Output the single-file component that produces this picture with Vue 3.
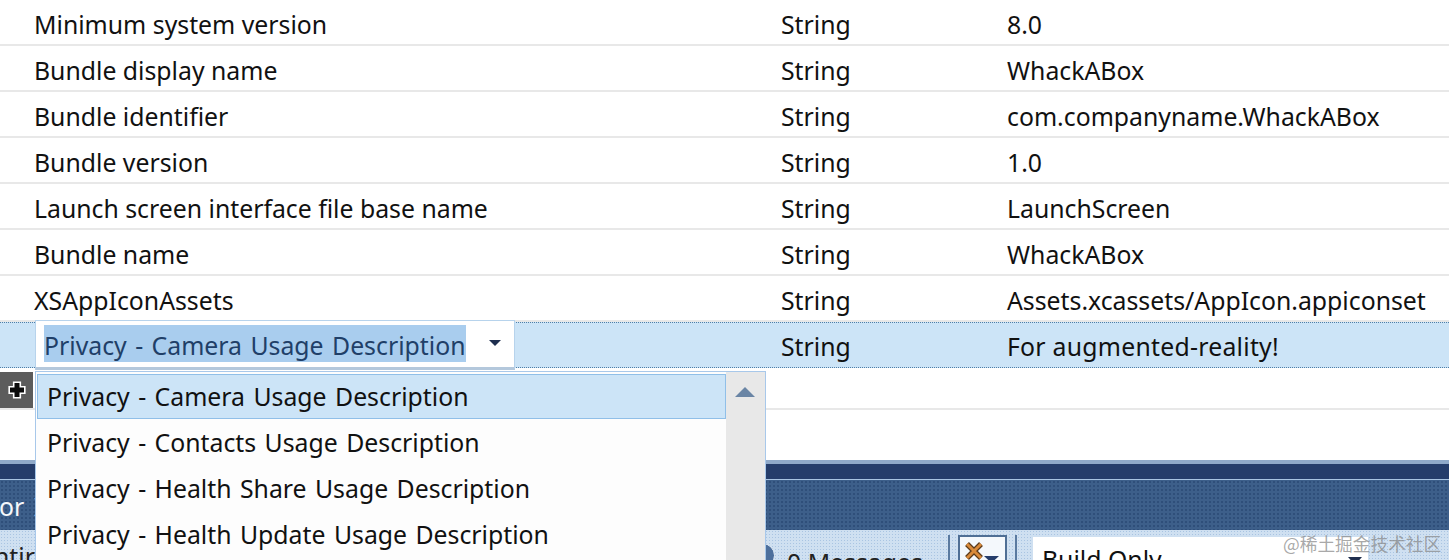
<script setup>
const rows = [
  ['Minimum system version', 'String', '8.0'],
  ['Bundle display name', 'String', 'WhackABox'],
  ['Bundle identifier', 'String', 'com.companyname.WhackABox'],
  ['Bundle version', 'String', '1.0'],
  ['Launch screen interface file base name', 'String', 'LaunchScreen'],
  ['Bundle name', 'String', 'WhackABox'],
  ['XSAppIconAssets', 'String', 'Assets.xcassets/AppIcon.appiconset'],
]
const options = [
  'Privacy - Camera Usage Description',
  'Privacy - Contacts Usage Description',
  'Privacy - Health Share Usage Description',
  'Privacy - Health Update Usage Description',
]
</script>

<template>
  <div class="page">
    <div class="row" v-for="r in rows" :key="r[0]">
      <span class="c1">{{ r[0] }}</span>
      <span class="c2">{{ r[1] }}</span>
      <span class="c3">{{ r[2] }}</span>
    </div>
    <div class="row selected">
      <span class="c1"></span>
      <span class="c2">String</span>
      <span class="c3 wide">For augmented-reality!</span>
    </div>
    <div class="add-row">
      <div class="add-btn">
        <svg width="20" height="20" viewBox="0 0 20 20">
          <path d="M7.500 3h5v4.500h4.500v5h-4.500v4.500h-5v-4.500h-4.500v-5h4.500z" fill="#0c0c0c" stroke="#fff" stroke-width="3.200" paint-order="stroke" />
        </svg>
      </div>
    </div>
    <div class="spacer"></div>
    <div class="navy"></div>
    <div class="band"><span class="band-text">or I</span></div>
    <div class="toolbar">
      <span class="tb-left">ntir</span>
      <span class="tb-circle"></span>
      <span class="tb-msg">0 Messages</span>
      <span class="tb-sep"></span>
      <span class="tb-btn">
        <svg width="44" height="25" viewBox="0 0 44 25">
          <path d="M6 7l14 14M20 7L6 21" stroke="#5a3a1a" stroke-width="5.500" fill="none" />
          <path d="M6 7l14 14M20 7L6 21" stroke="#d98a3a" stroke-width="3" fill="none" />
          <path d="M23 19h15l-7.500 7z" fill="#253d6b" />
        </svg>
      </span>
      <span class="tb-sep second"></span>
      <span class="tb-combo">Build Only<i class="tb-arrow"></i></span>
      <span class="watermark">@稀土掘金技术社区</span>
    </div>

    <div class="combo">
      <span class="combo-text">Privacy - Camera Usage Description</span>
      <i class="combo-arrow"></i>
    </div>
    <div class="dropdown">
      <div class="list">
        <div v-for="(o, i) in options" :key="o" class="opt" :class="{ active: i === 0 }">{{ o }}</div>
      </div>
      <div class="scroll"><i class="scroll-up"></i></div>
    </div>
  </div>
</template>

<style scoped>
.page {
  position: relative;
  width: 1449px;
  height: 560px;
  overflow: hidden;
  background: #fff;
  color: #111;
  font-family: "Noto Sans", "Open Sans", sans-serif;
  font-size: 24.8px;
}
.row {
  display: flex;
  align-items: center;
  height: 46px;
  box-sizing: border-box;
  border-bottom: 2px solid #e8e8e8;
  padding-top: 3px;
  white-space: nowrap;
}
.c1 { width: 781px; padding-left: 34px; box-sizing: border-box; flex: none; }
.c2 { width: 226px; flex: none; }
.wide { letter-spacing: 0.25px; }
.row.selected {
  background: #cce4f7;
  border-top: 1px dotted #4f7fa8;
  border-bottom: 1px dotted #4f7fa8;
  padding-top: 2px;
}
.add-row {
  height: 42px;
  box-sizing: border-box;
  border-bottom: 2px solid #e8e8e8;
  padding-top: 4px;
}
.add-btn {
  width: 33px;
  height: 36px;
  background: #5c5c5c;
  display: flex;
  align-items: center;
  justify-content: center;
}
.spacer { height: 50px; }
.navy {
  height: 19px;
  box-sizing: border-box;
  background: #253d6b;
  border-top: 4px solid #8fa9c9;
}
.band {
  height: 51px;
  box-sizing: border-box;
  border-top: 1px solid #a9c4e2;
  background: #3d5f8a radial-gradient(#2f4f7a 1px, transparent 1px) 0 0 / 4px 4px;
  color: #f4f7fb;
  padding-top: 9px;
  white-space: nowrap;
}
.band-text { margin-left: -1px; display: block; word-spacing: 3px; }
.toolbar {
  position: relative;
  height: 30px;
  background: #cfe0f1 radial-gradient(#a9c4e2 1px, transparent 1px) 0 0 / 3px 3px;
  white-space: nowrap;
}
.tb-left { position: absolute; left: -6px; top: 9px; color: #222; }
.tb-circle {
  position: absolute;
  left: 750px;
  top: 13px;
  width: 25px;
  height: 25px;
  border-radius: 50%;
  box-sizing: border-box;
  background: #4d6f9c;
  border: 1px solid #e6eff8;
}
.tb-msg { position: absolute; left: 787px; top: 15px; color: #222; }
.tb-sep {
  position: absolute;
  left: 948px;
  top: 5px;
  width: 2px;
  height: 25px;
  background: #5a7aa0;
}
.tb-sep.second { left: 1015px; }
.tb-btn {
  position: absolute;
  left: 958px;
  top: 5px;
  width: 49px;
  height: 30px;
  box-sizing: border-box;
  border: 2px solid #4f6f95;
  background: #f4f8fc;
  display: flex;
  justify-content: center;
  align-items: flex-start;
}
.tb-combo {
  position: absolute;
  left: 1033px;
  top: 7px;
  width: 335px;
  height: 30px;
  background: #fff;
  padding-left: 9px;
  box-sizing: border-box;
  line-height: 44px;
  color: #111;
}
.tb-arrow {
  position: absolute;
  right: 6px;
  top: 20px;
  border: 7px solid transparent;
  border-top: 8px solid #1f2f4f;
}
.watermark {
  position: absolute;
  left: 1283px;
  top: 0;
  font-family: "Noto Sans CJK SC", sans-serif;
  font-size: 17.7px;
  color: rgba(130, 130, 130, 0.7);
}
.combo {
  position: absolute;
  left: 35px;
  top: 320px;
  width: 480px;
  height: 50px;
  box-sizing: border-box;
  background: #fff;
  border: 1px solid #b7d3ec;
  border-bottom: 3px solid #b4c8dc;
  display: flex;
  align-items: flex-start;
  padding: 4px 0 0 8px;
  color: #1f3f68;
}
.combo-text {
  background: #a9cdee;
  height: 37px;
  line-height: 40px;
  width: 422px;
  flex: none;
  white-space: nowrap;
  word-spacing: 2px;
}
.combo-arrow {
  position: absolute;
  left: 453px;
  top: 19px;
  border: 6px solid transparent;
  border-top: 6px solid #1f2f4f;
}
.dropdown {
  position: absolute;
  left: 35px;
  top: 371px;
  width: 731px;
  height: 200px;
  box-sizing: border-box;
  border: 1px solid #a8c8ea;
  background: #fdfdfd;
  display: flex;
}
.list { flex: 1; padding: 2px 0 0 1px; }
.opt {
  height: 46px;
  line-height: 44px;
  padding-left: 10px;
  white-space: nowrap;
  word-spacing: 2px;
}
.opt.active {
  height: 45px;
  line-height: 43px;
  margin-bottom: 1px;
  box-sizing: border-box;
  background: #cce4f7;
  border: 1px solid #90bfe8;
  padding-left: 9px;
}
.scroll {
  width: 39px;
  background: #e8e8e8;
  flex: none;
  position: relative;
}
.scroll-up {
  position: absolute;
  left: 9px;
  top: 15px;
  border: 10px solid transparent;
  border-top: 0;
  border-bottom: 10px solid #6a85a5;
}
</style>
